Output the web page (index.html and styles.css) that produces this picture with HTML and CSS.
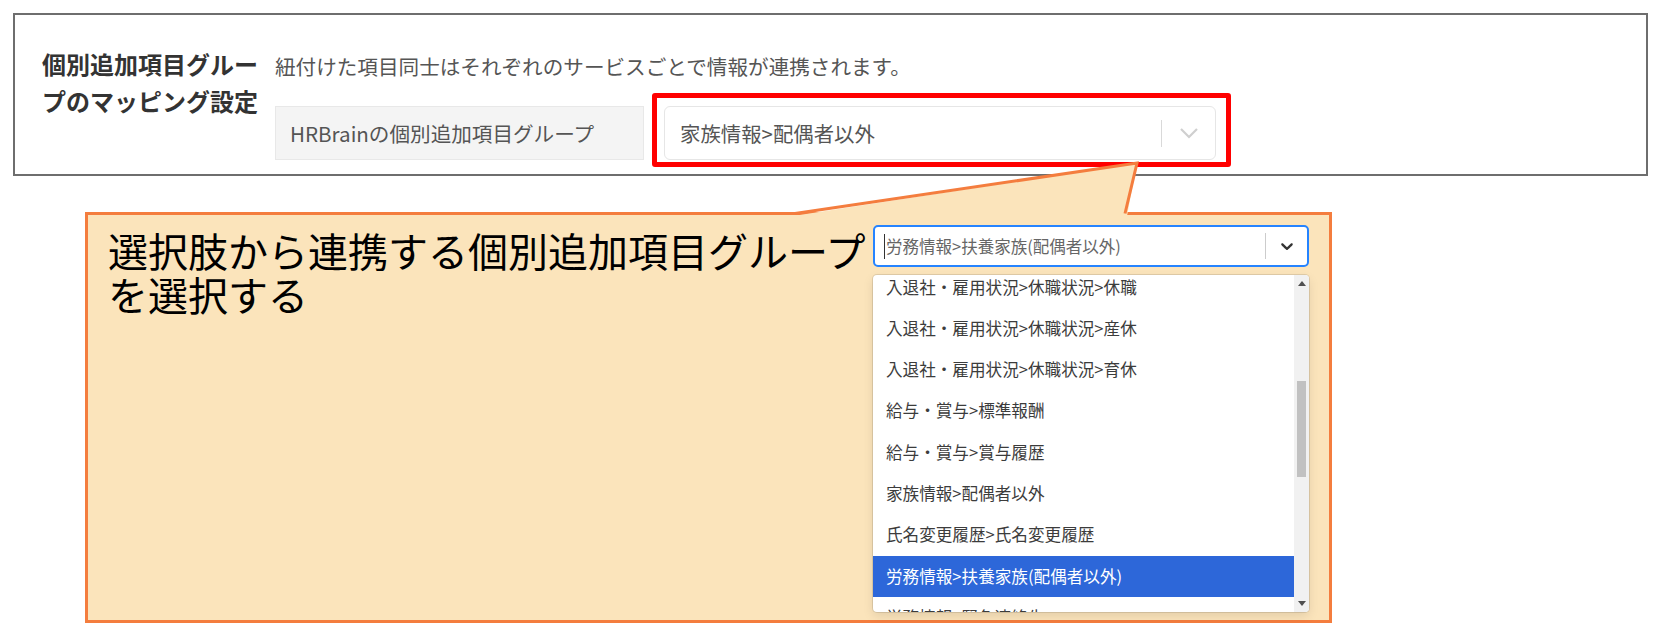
FILE: index.html
```html
<!DOCTYPE html>
<html lang="ja">
    <head>
        <meta charset="UTF-8" />
        <meta name="viewport" content="width=device-width, initial-scale=1.0" />
        <title>個別追加項目グループのマッピング設定</title>
        <link rel="stylesheet" href="styles.css">
    </head>
    <body>
        <section class="panel">
            <div class="panel-label">個別追加項目グルー<br>プのマッピング設定</div>
            <div class="panel-body">
                <p class="panel-note">紐付けた項目同士はそれぞれのサービスごとで情報が連携されます。</p>
                <div class="mapping-row">
                    <div class="mapping-name">HRBrainの個別追加項目グループ</div>
                    <div class="select-wrap">
                        <div class="select">
                            <span class="select-value">家族情報&gt;配偶者以外</span>
                            <span class="select-sep"></span>
                            <span class="select-arrow">
                                <svg width="20" height="12" viewBox="0 0 20 12"><polyline points="2,2 10,10 18,2" fill="none" stroke="#cfcfcf" stroke-width="2.2"/></svg>
                            </span>
                        </div>
                        <div class="mark-frame"></div>
                    </div>
                </div>
            </div>
        </section>

        <div class="callout">
            <svg class="callout-tail" width="1100" height="60" viewBox="0 0 1100 60">
                <polygon points="708,56 1052,3 1042,56" fill="#fbe4bb"/>
                <polyline points="710,53.5 1052,3 1040,53.5" fill="none" stroke="#f47d3e" stroke-width="3"/>
            </svg>
            <div class="callout-text">
                <span class="callout-line">選択肢から連携する個別追加項目グループ</span>
                <span class="callout-line">を選択する</span>
            </div>

            <div class="picker">
                <div class="picker-control">
                    <span class="picker-caret"></span>
                    <span class="picker-value">労務情報&gt;扶養家族(配偶者以外)</span>
                    <span class="picker-sep"></span>
                    <span class="picker-arrow">
                        <svg width="20" height="20" viewBox="0 0 20 20"><path fill="#333" d="M4.516 7.548c0.436-0.446 1.043-0.481 1.576 0l3.908 3.747 3.908-3.747c0.533-0.481 1.141-0.446 1.574 0 0.436 0.445 0.408 1.197 0 1.615-0.406 0.418-4.695 4.502-4.695 4.502-0.217 0.223-0.502 0.335-0.787 0.335s-0.57-0.112-0.789-0.335c0 0-4.287-4.084-4.695-4.502s-0.436-1.17 0-1.615z"/></svg>
                    </span>
                </div>
                <div class="picker-menu">
                    <div class="picker-list">
                        <div class="picker-items">
                            <div class="picker-option">入退社・雇用状況&gt;休職状況&gt;休職</div>
                            <div class="picker-option">入退社・雇用状況&gt;休職状況&gt;産休</div>
                            <div class="picker-option">入退社・雇用状況&gt;休職状況&gt;育休</div>
                            <div class="picker-option">給与・賞与&gt;標準報酬</div>
                            <div class="picker-option">給与・賞与&gt;賞与履歴</div>
                            <div class="picker-option">家族情報&gt;配偶者以外</div>
                            <div class="picker-option">氏名変更履歴&gt;氏名変更履歴</div>
                            <div class="picker-option is-focused">労務情報&gt;扶養家族(配偶者以外)</div>
                            <div class="picker-option">労務情報&gt;緊急連絡先</div>
                        </div>
                    </div>
                    <div class="picker-scroll">
                        <div class="scroll-btn">
                            <svg width="8" height="5" viewBox="0 0 8 5"><polygon points="0,5 4,0 8,5" fill="#505050"/></svg>
                        </div>
                        <div class="scroll-track"><div class="scroll-thumb"></div></div>
                        <div class="scroll-btn">
                            <svg width="8" height="5" viewBox="0 0 8 5"><polygon points="0,0 4,5 8,0" fill="#505050"/></svg>
                        </div>
                    </div>
                </div>
            </div>
        </div>
    </body>
</html>
```

FILE: styles.css
```css
html,
body {
    margin: 0;
}

body {
    background: #fff;
    font-family: "Noto Sans CJK JP", "Noto Sans", sans-serif;
    color: #333;
}

/* Settings panel */
.panel {
    margin: 13px 13px 0;
    height: 163px;
    box-sizing: border-box;
    border: 2px solid #6e6e6e;
    padding: 30px 20px 14px 27px;
    display: grid;
    grid-template-columns: 233px 1fr;
    align-items: start;
}

.panel-label {
    font-size: 24px;
    font-weight: 700;
    line-height: 37px;
    white-space: nowrap;
    color: #333;
}

.panel-body {
    padding-top: 6px;
}

.panel-note {
    margin: 0 0 25px;
    font-size: 20.6px;
    line-height: 30px;
    color: #555;
    white-space: nowrap;
}

.mapping-row {
    display: flex;
    align-items: center;
}

.mapping-name {
    width: 369px;
    height: 54px;
    box-sizing: border-box;
    padding-left: 14px;
    display: flex;
    align-items: center;
    background: #f4f4f4;
    border: 1px solid #e8e8e8;
    font-size: 20.6px;
    color: #555;
    white-space: nowrap;
}

.select-wrap {
    position: relative;
    margin-left: 20px;
    width: 552px;
}

.select {
    height: 54px;
    box-sizing: border-box;
    border: 1px solid #e6e6e6;
    border-radius: 6px;
    background: #fff;
    display: flex;
    align-items: center;
}

.select-value {
    flex: 1;
    padding-left: 15px;
    font-size: 20.4px;
    color: #555;
}

.select-sep {
    width: 1px;
    height: 27px;
    background: #d9d9d9;
}

.select-arrow {
    width: 53px;
    display: flex;
    justify-content: center;
}

/* red annotation frame */
.mark-frame {
    position: absolute;
    top: -13px;
    left: -12px;
    right: -15px;
    bottom: -7px;
    border: 5px solid #ff0000;
    border-radius: 3px;
    pointer-events: none;
}

/* Callout */
.callout {
    position: relative;
    margin: 36px 0 0 85px;
    width: 1247px;
    height: 411px;
    box-sizing: border-box;
    border: 3px solid #f47d3e;
    background: #fbe4bb;
    padding: 10px 0 0 20px;
    display: flex;
    align-items: flex-start;
}

.callout-tail {
    position: absolute;
    left: -3px;
    top: -55px;
    overflow: visible;
}

.callout-text {
    margin-top: 3px;
    width: 765px;
    font-size: 40px;
    color: #000;
    white-space: nowrap;
}

.callout-line {
    display: block;
    height: 44px;
    line-height: 44px;
}

/* Dropdown */
.picker {
    width: 436px;
}

.picker-control {
    height: 42px;
    box-sizing: border-box;
    border: 2px solid #2684ff;
    border-radius: 5px;
    background: #fff;
    padding-left: 9px;
    display: flex;
    align-items: center;
}

.picker-caret {
    width: 1px;
    height: 25px;
    background: #333;
}

.picker-value {
    flex: 1;
    padding-left: 1px;
    font-size: 16.5px;
    color: #666;
    white-space: nowrap;
}

.picker-sep {
    width: 1px;
    height: 26px;
    background: #ccc;
}

.picker-arrow {
    width: 41px;
    display: flex;
    justify-content: center;
}

.picker-menu {
    margin-top: 8px;
    height: 337px;
    background: #fff;
    border-radius: 4px;
    box-shadow: 0 0 0 1px rgba(0, 0, 0, 0.1), 0 4px 11px rgba(0, 0, 0, 0.1);
    display: flex;
    overflow: hidden;
}

.picker-list {
    flex: 1;
    overflow: hidden;
}

.picker-items {
    margin-top: -8.5px;
}

.picker-option {
    height: 41.3px;
    line-height: 41.3px;
    padding-left: 13px;
    font-size: 16.6px;
    color: #3c3c3c;
    white-space: nowrap;
}

.picker-option.is-focused {
    background: #2d67d9;
    color: #fff;
}

.picker-scroll {
    width: 15px;
    background: #f1f1f1;
    display: flex;
    flex-direction: column;
}

.scroll-btn {
    height: 17px;
    display: flex;
    align-items: center;
    justify-content: center;
}

.scroll-track {
    flex: 1;
}

.scroll-thumb {
    margin: 89px auto 0;
    width: 9px;
    height: 96px;
    background: #c1c1c1;
}
```
